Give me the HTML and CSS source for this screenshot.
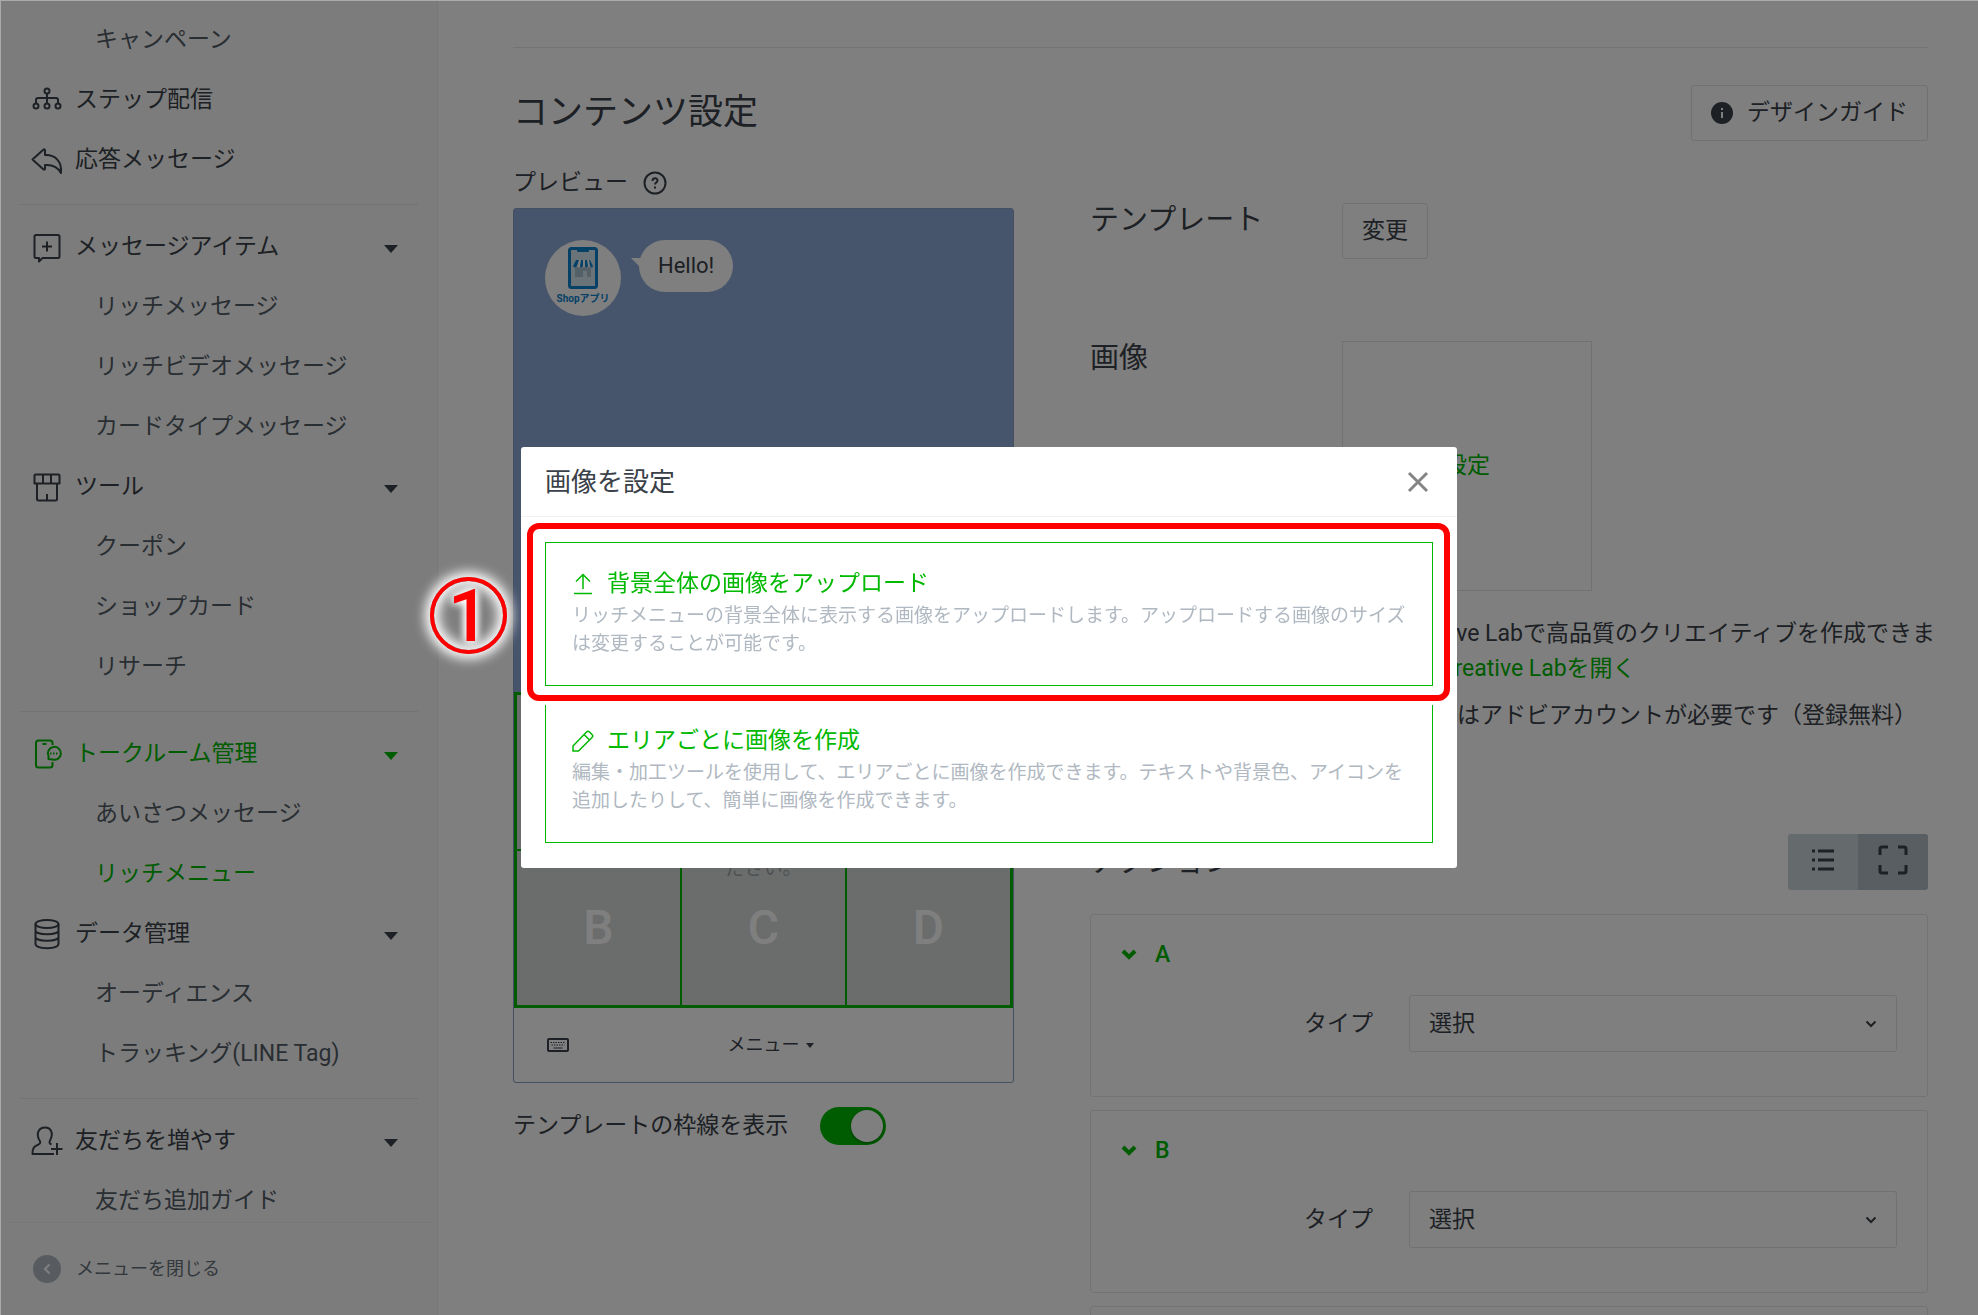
FILE: index.html
```html
<!DOCTYPE html>
<html lang="ja">
  <head>
    <meta charset="UTF-8" />
    <meta name="viewport" content="width=device-width, initial-scale=1.0" />
    <title>リッチメニュー</title>
    <link rel="stylesheet" href="styles.css">
  </head>

  <body>
    <div class="app">
      <aside class="sidebar">
        <nav class="menu">
          <a href="#" class="sub">キャンペーン</a>
          <a href="#" class="item">
            <svg class="icon" viewBox="0 0 32 32">
              <circle cx="16" cy="7" r="2.5" /><circle cx="5" cy="22" r="2.5" /><circle cx="16" cy="22" r="2.5" /><circle cx="27" cy="22" r="2.5" />
              <path d="M16 9.500v10M5 19.500v-3.500q0-2 2-2h18q2 0 2 2v3.500" />
            </svg>
            ステップ配信
          </a>
          <a href="#" class="item">
            <svg class="icon" viewBox="0 0 32 32">
              <path d="M1.500 15.500 12 6q2-1.500 2 .500v4.500C24 10.500 31 17 30 29c-3-6-8-8.500-16-8v3.500q0 2-2 .500z" />
            </svg>
            応答メッセージ
          </a>
          <hr />
          <a href="#" class="item open">
            <svg class="icon" viewBox="0 0 32 32">
              <path d="M5 4h22q1.500 0 1.500 1.500v20q0 1.500-1.500 1.500H11.500L8 30.500V27H5q-1.500 0-1.500-1.500v-20Q3.500 4 5 4zM16 10.500v10M11 15.500h10" />
            </svg>
            メッセージアイテム
          </a>
          <a href="#" class="sub">リッチメッセージ</a>
          <a href="#" class="sub">リッチビデオメッセージ</a>
          <a href="#" class="sub">カードタイプメッセージ</a>
          <a href="#" class="item open">
            <svg class="icon" viewBox="0 0 32 32">
              <path d="M4.500 3.500h23q1 0 1 1v8h-25v-8q0-1 1-1zM12 3.500v9M20 3.500v9M6 12.500V28q0 1.500 1.500 1.500h17Q26 29.500 26 28V12.500M16 23v6" />
            </svg>
            ツール
          </a>
          <a href="#" class="sub">クーポン</a>
          <a href="#" class="sub">ショップカード</a>
          <a href="#" class="sub">リサーチ</a>
          <hr />
          <a href="#" class="item open active">
            <svg class="icon" viewBox="0 0 32 32">
              <path d="M21.500 7V5q0-2.500-2.500-2.500H7.500Q5 2.500 5 5v22q0 2.500 2.500 2.500H19q2.500 0 2.500-2.500v-3M11.500 6h4" />
              <path d="M17.500 21v-3a6.500 6.500 0 1 1 4 3.500z" />
              <path d="M19 15.500h1.500M22 15.500h1.500M25 15.500h1.500" />
            </svg>
            トークルーム管理
          </a>
          <a href="#" class="sub">あいさつメッセージ</a>
          <a href="#" class="sub active">リッチメニュー</a>
          <a href="#" class="item open">
            <svg class="icon" viewBox="0 0 32 32">
              <ellipse cx="16" cy="6" rx="11.500" ry="4" />
              <path d="M4.500 6v20c0 5.500 23 5.500 23 0V6M4.500 12.500c0 5 23 5 23 0M4.500 19c0 5 23 5 23 0" />
            </svg>
            データ管理
          </a>
          <a href="#" class="sub">オーディエンス</a>
          <a href="#" class="sub">トラッキング(LINE Tag)</a>
          <hr />
          <a href="#" class="item open">
            <svg class="icon" viewBox="0 0 32 32">
              <path d="M23 29H1.500c0-7 2-7.500 6-9.500 2.500-1.500 2-3 .5-5C5 8 8 2.500 14 2.500S22.500 8 19.500 14.500c-1.500 2.500-1.500 4 1 5M26 18v12M20 24h11.500" />
            </svg>
            友だちを増やす
          </a>
          <a href="#" class="sub">友だち追加ガイド</a>
        </nav>
        <button class="collapse">
          <svg viewBox="0 0 28 28"><circle cx="14" cy="14" r="14" /><path d="M16.500 9.500 12 14l4.500 4.500" /></svg>
          メニューを閉じる
        </button>
      </aside>

      <main class="content">
        <hr />
        <div class="title-row">
          <h1>コンテンツ設定</h1>
          <button class="btn">
            <svg viewBox="0 0 22 22"><circle cx="11" cy="11" r="11" /><path d="M11 6v2M11 10v6" /></svg>
            デザインガイド
          </button>
        </div>

        <div class="columns">
          <section class="preview-col">
            <h2>
              プレビュー
              <svg viewBox="0 0 24 24"><circle cx="12" cy="12" r="10.500" /><path d="M9.500 10c0-3.500 5-3.500 5-.5 0 2-2.500 2-2.500 4M12 15.500v2" /></svg>
            </h2>
            <div class="preview">
              <div class="chat">
                <div class="avatar">
                  <svg viewBox="0 0 30 42">
                    <rect x="1.500" y="1.500" width="27" height="39" rx="2" fill="#d3e6f0" stroke="#0b83cd" stroke-width="3" />
                    <path d="M9 1h12v3q0 1-1 1H10q-1 0-1-1z" fill="#0b83cd" />
                    <path d="M7 20h16v10h-4v-6h-4v6H7z" fill="#a9c0cf" />
                    <path d="M8 13h14l3 6q-2 3-4 0-2 3-4 0-2 3-4 0-2 3-4 0-2 3-4 0z" fill="#fff" />
                    <path d="M8 13h3l-2 6q-2 3-4 0zM13 13h2v6q-2 3-3 0zM17 13h2l1 6q-2 3-3 0zM22 13l3 6q-1 3-3 0l-1-6z" fill="#0b83cd" />
                  </svg>
                  <span>Shopアプリ</span>
                </div>
                <div class="bubble">Hello!</div>
              </div>
              <div class="rich-menu">
                <div class="cell wide">A</div>
                <div class="cell">B</div>
                <div class="cell">C</div>
                <div class="cell">D</div>
                <p>画像をアップロードしてく<br />ださい。</p>
              </div>
              <div class="menu-bar">
                <svg viewBox="0 0 22 14">
                  <rect x="1" y="1" width="20" height="12" rx="1" />
                  <path d="M3.500 4.500h15M4.500 7h13" stroke-dasharray="1.500 1" /><path d="M6.500 10h9" />
                </svg>
                <span>メニュー</span>
              </div>
            </div>
            <div class="border-toggle">
              <label for="showBorder">テンプレートの枠線を表示</label>
              <input type="checkbox" id="showBorder" class="switch" checked />
            </div>
          </section>

          <section class="settings">
            <div class="field">
              <h3>テンプレート</h3>
              <button class="btn">変更</button>
            </div>
            <div class="field image-field">
              <h3>画像</h3>
              <div class="image-body">
                <button class="image-box">設定</button>
                <p>LINE Creative Labで高品質のクリエイティブを作成できま<br />す。<a href="#">LINE Creative Labを開く</a></p>
                <p>※ご利用にはアドビアカウントが必要です（登録無料）</p>
              </div>
            </div>

            <div class="action-row">
              <h3>アクション</h3>
              <div class="view-switch">
                <button aria-label="リスト表示">
                  <svg viewBox="0 0 24 24"><path d="M1 3h3M7 3h16M1 12h3M7 12h16M1 21h3M7 21h16" /></svg>
                </button>
                <button class="on" aria-label="全体表示">
                  <svg viewBox="0 0 30 30"><path d="M2 10V4q0-2 2-2h6M20 2h6q2 0 2 2v6M28 20v6q0 2-2 2h-6M10 28H4q-2 0-2-2v-6" /></svg>
                </button>
              </div>
            </div>

            <div class="card">
              <button class="card-head">
                <svg viewBox="0 0 16 12"><path d="M2 2l6 6 6-6" /></svg>A
              </button>
              <div class="card-row">
                <label for="typeA">タイプ</label>
                <div class="select-wrap">
                  <select id="typeA"><option>選択</option></select>
                  <svg viewBox="0 0 12 8"><path d="M1.500 1.500 6 6l4.500-4.500" /></svg>
                </div>
              </div>
            </div>
            <div class="card">
              <button class="card-head">
                <svg viewBox="0 0 16 12"><path d="M2 2l6 6 6-6" /></svg>B
              </button>
              <div class="card-row">
                <label for="typeB">タイプ</label>
                <div class="select-wrap">
                  <select id="typeB"><option>選択</option></select>
                  <svg viewBox="0 0 12 8"><path d="M1.500 1.500 6 6l4.500-4.500" /></svg>
                </div>
              </div>
            </div>
            <div class="card"></div>
          </section>
        </div>
      </main>
    </div>

    <div class="overlay">
      <div class="modal" role="dialog" aria-labelledby="modalTitle">
        <div class="modal-head">
          <h2 id="modalTitle">画像を設定</h2>
          <button class="close" aria-label="閉じる">
            <svg viewBox="0 0 22 22"><path d="M2 2l18 18M20 2 2 20" /></svg>
          </button>
        </div>
        <div class="modal-body">
          <button class="option marked">
            <span class="option-title">
              <svg viewBox="0 0 22 22" stroke-width="1.500"><path d="M11 16V1.500M4 8.500l7-7 7 7M2 20.500h18" /></svg>
              背景全体の画像をアップロード
            </span>
            <span class="option-text">リッチメニューの背景全体に表示する画像をアップロードします。アップロードする画像のサイズは変更することが可能です。</span>
          </button>
          <button class="option">
            <span class="option-title">
              <svg viewBox="0 0 22 22" stroke-width="1.500"><path d="M1 21v-5L14.500 2q1.500-1.500 3 0L20 4.500q1.500 1.500 0 3L6.500 21zM12 4.500l5.500 5.500" /></svg>
              エリアごとに画像を作成
            </span>
            <span class="option-text">編集・加工ツールを使用して、エリアごとに画像を作成できます。テキストや背景色、アイコンを追加したりして、簡単に画像を作成できます。</span>
          </button>
        </div>
        <span class="step">1</span>
      </div>
    </div>
  </body>
</html>
```

FILE: styles.css
```css
* {
  box-sizing: border-box;
}

body {
  margin: 0;
  font-family: Roboto, "Noto Sans CJK JP", sans-serif;
  font-size: 23px;
  line-height: 30px;
  color: #3a4148;
  background: #fff;
}

h1,
h2,
h3,
p {
  margin: 0;
  font-weight: 400;
}

a {
  color: #00b900;
  text-decoration: none;
}

button,
select {
  font: inherit;
  color: inherit;
  cursor: pointer;
}

svg {
  flex: none;
  fill: none;
  stroke: currentColor;
}

hr {
  margin: 0;
  border: 0;
  border-top: 1px solid #e4e7ea;
}

.app {
  display: flex;
  height: 100vh;
  overflow: hidden;
}

/* sidebar */
.sidebar {
  flex: none;
  display: flex;
  flex-direction: column;
  width: 438px;
  background: #f9f9f9;
  border-right: 1px solid #eceef0;
}

.menu {
  flex: 1;
  min-height: 0;
  overflow: hidden;
  padding: 10px 19px 0 20px;
}

.menu hr {
  margin: 14px 0 12px;
}

.menu a {
  display: flex;
  align-items: center;
  height: 60px;
  color: #3a4148;
}

.menu .sub {
  padding-left: 75px;
  color: #525c66;
}

.menu .item {
  gap: 12px;
  padding: 0 20px 0 11px;
}

.menu .open::after {
  content: "";
  margin-left: auto;
  margin-top: 3px;
  border: 7px solid transparent;
  border-top: 8px solid currentColor;
  border-bottom: 0;
}

.menu .active {
  color: #00b900;
}

.icon {
  width: 32px;
  height: 32px;
  stroke-width: 2;
  stroke-linejoin: round;
}

.collapse {
  display: flex;
  align-items: center;
  gap: 15px;
  height: 93px;
  margin: 0 6px;
  padding: 0 27px;
  border: 0;
  border-top: 1px solid #eceef0;
  background: none;
  font-size: 18px;
  color: #66707a;
}

.collapse svg {
  width: 28px;
  height: 28px;
  stroke: #fff;
  stroke-width: 2;
}

.collapse circle {
  fill: #b0b8c1;
  stroke: none;
}

/* content */
.content {
  flex: 1;
  min-width: 0;
  padding: 47px 50px 0 75px;
}

.title-row {
  display: flex;
  justify-content: space-between;
  align-items: center;
  margin: 37px 0 25px;
}

h1 {
  font-size: 35px;
  line-height: 48px;
}

.btn {
  display: flex;
  align-items: center;
  gap: 14px;
  height: 56px;
  padding: 0 19px;
  border: 1px solid #dfe3e6;
  border-radius: 3px;
  background: #fff;
}

.btn svg {
  width: 22px;
  height: 22px;
  stroke: #fff;
  stroke-width: 2;
}

.btn circle {
  fill: #3a4148;
  stroke: none;
}

.columns {
  display: flex;
  gap: 76px;
}

.preview-col {
  flex: none;
  width: 501px;
}

.preview-col h2 {
  display: flex;
  align-items: center;
  gap: 15px;
  height: 34px;
  margin-bottom: 8px;
  font-size: 23px;
}

.preview-col h2 svg {
  width: 24px;
  height: 24px;
  stroke-width: 2;
}

.preview {
  border: 1px solid #8b9fc4;
  border-radius: 3px;
  background: #fff;
}

.chat {
  display: flex;
  align-items: flex-start;
  gap: 18px;
  height: 483px;
  padding: 31px;
  background: #8fabd9;
}

.avatar {
  display: flex;
  flex-direction: column;
  align-items: center;
  width: 76px;
  height: 76px;
  padding-top: 7px;
  border-radius: 50%;
  background: #fff;
}

.avatar svg {
  width: 30px;
  height: 42px;
  stroke: none;
}

.avatar span {
  font-size: 10px;
  font-weight: 700;
  line-height: 20px;
  color: #0b83cd;
}

.bubble {
  position: relative;
  padding: 11px 19px;
  border-radius: 26px;
  background: #fff;
  font-size: 22px;
}

.bubble::before {
  content: "";
  position: absolute;
  left: -8px;
  top: 18px;
  border-top: 12px solid #fff;
  border-left: 12px solid transparent;
}

.rich-menu {
  position: relative;
  display: grid;
  grid-template-columns: repeat(3, 1fr);
  grid-template-rows: 154px 154px;
  gap: 2px;
  padding: 3px;
  background: #00b900;
}

.cell {
  display: flex;
  align-items: center;
  justify-content: center;
  background: #d7dbd9;
  color: #fff;
  font-size: 48px;
  font-weight: 500;
}

.wide {
  grid-column: 1 / -1;
}

/* guide text lies over the cells */
.rich-menu p {
  position: absolute;
  inset: 0;
  display: grid;
  place-content: center;
  text-align: center;
  font-size: 19px;
  line-height: 38px;
  color: #9aa1a6;
}

.menu-bar {
  display: grid;
  grid-template-columns: 1fr auto 1fr;
  align-items: center;
  height: 74px;
  padding: 0 33px;
  font-size: 18px;
}

.menu-bar svg {
  width: 22px;
  height: 14px;
  stroke-width: 2;
}

.menu-bar path {
  stroke-width: 1;
}

.menu-bar span {
  display: flex;
  align-items: center;
  gap: 6px;
  padding-left: 14px;
}

.menu-bar span::after {
  content: "";
  border: 4px solid transparent;
  border-top: 5px solid currentColor;
  border-bottom: 0;
}

.border-toggle {
  display: flex;
  align-items: center;
  gap: 32px;
  margin-top: 24px;
}

.switch {
  appearance: none;
  width: 66px;
  height: 38px;
  margin: 0;
  padding: 3px;
  border-radius: 19px;
  background: #00b900;
}

.switch::before {
  content: "";
  display: block;
  width: 32px;
  height: 32px;
  margin-left: auto;
  border-radius: 50%;
  background: #fff;
  box-shadow: 0 1px 3px rgba(0, 0, 0, 0.4);
}

.settings {
  flex: 1;
  min-width: 0;
  padding-top: 37px;
}

h3 {
  font-size: 29px;
  line-height: 34px;
}

.field {
  display: grid;
  grid-template-columns: 252px 1fr;
  justify-items: start;
}

.image-field {
  margin-top: 82px;
}

.image-box {
  display: block;
  width: 250px;
  height: 250px;
  margin-bottom: 25px;
  border: 1px solid #dfe3e6;
  background: #fff;
  color: #00b900;
}

.image-body p {
  margin-bottom: 12px;
  line-height: 35px;
  white-space: nowrap;
}

.action-row {
  display: flex;
  justify-content: space-between;
  align-items: center;
  margin: 89px 0 24px;
}

.action-row h3 {
  line-height: 30px;
}

.view-switch {
  display: flex;
  overflow: hidden;
  border-radius: 3px;
}

.view-switch button {
  display: grid;
  place-items: center;
  width: 70px;
  height: 56px;
  padding: 0 0 4px;
  border: 0;
  background: #cbd5db;
}

.view-switch .on {
  background: #b2bdc5;
}

.view-switch svg {
  width: 24px;
  height: 24px;
  stroke-width: 3;
}

.view-switch .on svg {
  width: 30px;
  height: 30px;
  stroke-width: 3;
}

.card {
  min-height: 183px;
  margin-bottom: 13px;
  padding: 25px 30px;
  border: 1px solid #e4e7ea;
  border-radius: 3px;
}

.card-head {
  display: flex;
  align-items: center;
  gap: 18px;
  margin-bottom: 25px;
  padding: 0;
  border: 0;
  background: none;
  font-weight: 500;
  color: #00b900;
}

.card-head svg {
  width: 16px;
  height: 12px;
  stroke-width: 4;
}

.card-row {
  display: grid;
  grid-template-columns: 252px 1fr;
  align-items: center;
  gap: 36px;
}

.card-row label {
  text-align: right;
}

.select-wrap {
  position: relative;
}

select {
  appearance: none;
  display: block;
  width: 100%;
  height: 57px;
  padding: 0 19px;
  border: 1px solid #dfe3e6;
  border-radius: 3px;
  background: #fff;
}

.select-wrap svg {
  position: absolute;
  right: 20px;
  top: 25px;
  width: 12px;
  height: 8px;
  stroke-width: 2;
  pointer-events: none;
}

/* modal */
.overlay {
  position: fixed;
  inset: 0;
  display: flex;
  align-items: center;
  justify-content: center;
  background: rgba(0, 0, 0, 0.5);
  box-shadow: inset 1px 1px rgba(255, 255, 255, 0.35);
}

.modal {
  position: relative;
  width: 936px;
  border-radius: 3px;
  background: #fff;
}

.modal-head {
  display: flex;
  align-items: center;
  justify-content: space-between;
  height: 70px;
  padding: 0 28px 0 24px;
  border-bottom: 1px solid #f1f2f4;
}

.modal-head h2 {
  font-size: 26px;
}

.close {
  display: flex;
  padding: 0;
  border: 0;
  background: none;
  color: #848484;
}

.close svg {
  width: 22px;
  height: 22px;
  stroke-width: 3;
}

.modal-body {
  display: grid;
  gap: 13px;
  padding: 25px 24px;
}

.option {
  position: relative;
  min-height: 144px;
  padding: 25px 20px 27px 26px;
  border: 1px solid #00b900;
  background: #fff;
  text-align: left;
}

.option-title {
  display: flex;
  align-items: center;
  gap: 13px;
  margin-bottom: 2px;
  line-height: 32px;
  color: #00b900;
}

.option-title svg {
  width: 22px;
  height: 22px;
}

.option-text {
  display: block;
  font-size: 19px;
  line-height: 28px;
  color: #b0b8c1;
}

/* red callout with a thin white halo */
.marked {
  z-index: 1;
}

.marked::after {
  content: "";
  position: absolute;
  inset: -20px -18px -16px -19px;
  border: 6px solid #f00;
  border-radius: 12px;
  box-shadow: 0 0 0 4px #fff;
}

.step {
  position: absolute;
  left: -91px;
  top: 130px;
  width: 77px;
  height: 77px;
  border: 4px solid #f00;
  border-radius: 50%;
  box-shadow: 0 0 12px 5px #fff, inset 0 0 12px 5px #fff;
  color: #f00;
  font-size: 72px;
  font-weight: 500;
  line-height: 72px;
  text-align: center;
  text-shadow: 0 0 8px #fff, 0 0 8px #fff, 0 0 10px #fff;
}
```
